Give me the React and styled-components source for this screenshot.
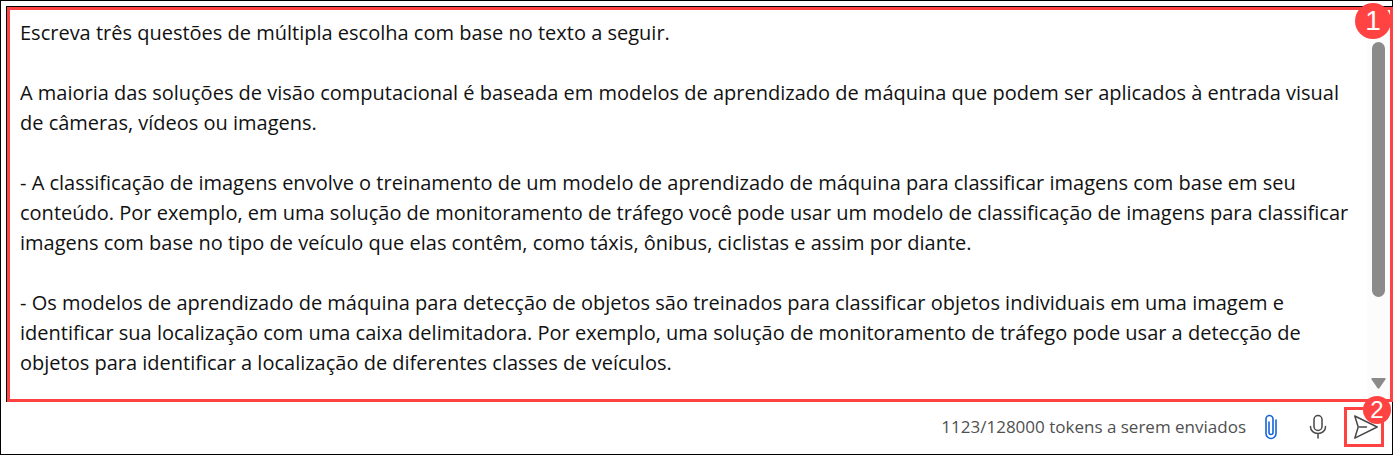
import React, { useState } from "react";
import styled, { createGlobalStyle } from "styled-components";

const RED = "#ff4343";

const GlobalStyle = createGlobalStyle`
  * { box-sizing: border-box; }
  body {
    margin: 0;
    background: #fff;
    color: #111;
    font-family: "Segoe UI", "Open Sans", "Noto Sans", sans-serif;
  }
`;

const Frame = styled.main`
  border: 1px solid #000;
  padding: 5px 0 0 5px;
`;

const Field = styled.section`
  position: relative;
  margin-right: -1px;
  border: 0 solid #000;
  border-width: 1px 0 0 1px;
`;

const Highlight = styled.div`
  display: flex;
  border: 3px solid ${RED};
`;

const Prompt = styled.textarea`
  flex: 1;
  min-width: 0;
  display: block;
  height: 389px;
  margin: 0;
  padding: 8px 16px 0 10px;
  border: 0;
  outline: 0;
  resize: none;
  overflow: hidden;
  background: transparent;
  color: inherit;
  font-family: inherit;
  font-size: 20px;
  line-height: 30px;
`;

const Track = styled.div`
  display: flex;
  flex-direction: column;
  align-items: center;
  justify-content: space-between;
  width: 23px;
  padding: 32px 0 10px;
  background: #fcfcfc;
`;

const Thumb = styled.div`
  width: 13px;
  height: 255px;
  border-radius: 7px;
  background: #8b8b8b;
`;

const Badge = styled.span`
  position: absolute;
  top: ${(p) => p.$top}px;
  right: ${(p) => p.$right}px;
  display: grid;
  place-items: center;
  width: ${(p) => p.$size}px;
  height: ${(p) => p.$size}px;
  border-radius: 50%;
  background: ${RED};
  color: #fff;
  font-family: "Liberation Sans", Arial, sans-serif;
  font-size: ${(p) => p.$font}px;
  line-height: 1;
`;

const Footer = styled.footer`
  display: flex;
  align-items: center;
  justify-content: flex-end;
  padding: 5px 8px 7px 0;
`;

const Tokens = styled.span`
  margin-right: 12px;
  color: #505050;
  font-size: 17px;
  line-height: 24px;
`;

const IconButton = styled.button`
  display: grid;
  place-items: center;
  width: 26px;
  height: 40px;
  margin-right: ${(p) => p.$gap}px;
  padding: 0;
  border: 0;
  background: transparent;
  color: ${(p) => p.$color || "#484848"};
  cursor: pointer;
`;

const SendButton = styled(IconButton)`
  position: relative;
  width: 40px;
  border: 3px solid ${RED};
`;

const TEXT = `Escreva três questões de múltipla escolha com base no texto a seguir.

A maioria das soluções de visão computacional é baseada em modelos de aprendizado de máquina que podem ser aplicados à entrada visual de câmeras, vídeos ou imagens.

- A classificação de imagens envolve o treinamento de um modelo de aprendizado de máquina para classificar imagens com base em seu conteúdo. Por exemplo, em uma solução de monitoramento de tráfego você pode usar um modelo de classificação de imagens para classificar imagens com base no tipo de veículo que elas contêm, como táxis, ônibus, ciclistas e assim por diante.

- Os modelos de aprendizado de máquina para detecção de objetos são treinados para classificar objetos individuais em uma imagem e identificar sua localização com uma caixa delimitadora. Por exemplo, uma solução de monitoramento de tráfego pode usar a detecção de objetos para identificar a localização de diferentes classes de veículos.`;

const ClipIcon = () => (
  <svg width="14" height="26" viewBox="0 0 14 26" fill="none" stroke="currentColor" strokeWidth="1.6" strokeLinecap="round" aria-hidden="true">
    <path d="M12 6v13.5a5 5 0 0 1-10 0V5a3.5 3.5 0 0 1 7 0V18.5a2 2 0 0 1-4 0V8" />
  </svg>
);

const MicIcon = () => (
  <svg width="18" height="26" viewBox="0 0 18 26" fill="none" stroke="currentColor" strokeWidth="1.5" strokeLinecap="round" aria-hidden="true">
    <rect x="5" y="1.5" width="8" height="15" rx="4" />
    <path d="M1.5 12.5v.5a7.5 6.5 0 0 0 15 0v-.5M9 19.7V24" />
  </svg>
);

const SendIcon = () => (
  <svg width="28" height="26" viewBox="0 0 28 26" fill="none" stroke="currentColor" strokeWidth="1.5" strokeLinejoin="round" strokeLinecap="round" aria-hidden="true">
    <path d="M4.8 2 27.2 13 4.8 24.2 8.2 13ZM9.5 13H16.5" />
  </svg>
);

const ArrowDown = () => (
  <svg width="15" height="11" viewBox="0 0 15 11" fill="#8b8b8b" aria-hidden="true">
    <path d="M1.5 0h12q1.8 0 .9 1.6L8.6 10q-1.1 1.5-2.2 0L.6 1.6Q-.3 0 1.5 0Z" />
  </svg>
);

export default function App() {
  const [text, setText] = useState(TEXT);
  return (
    <>
      <GlobalStyle />
      <Frame>
        <Field>
          <Highlight>
            <Prompt
              aria-label="Mensagem"
              spellCheck={false}
              value={text}
              onChange={(e) => setText(e.target.value)}
            />
            <Track>
              <Thumb />
              <ArrowDown />
            </Track>
          </Highlight>
          <Badge $top={-4} $right={2} $size={36} $font={28}>1</Badge>
        </Field>
        <Footer>
          <Tokens>1123/128000 tokens a serem enviados</Tokens>
          <IconButton type="button" aria-label="Anexar" $gap={21} $color="#1565d8">
            <ClipIcon />
          </IconButton>
          <IconButton type="button" aria-label="Microfone" $gap={13}>
            <MicIcon />
          </IconButton>
          <SendButton type="button" aria-label="Enviar" $gap={0}>
            <SendIcon />
            <Badge $top={-14} $right={-10} $size={28} $font={24}>2</Badge>
          </SendButton>
        </Footer>
      </Frame>
    </>
  );
}
